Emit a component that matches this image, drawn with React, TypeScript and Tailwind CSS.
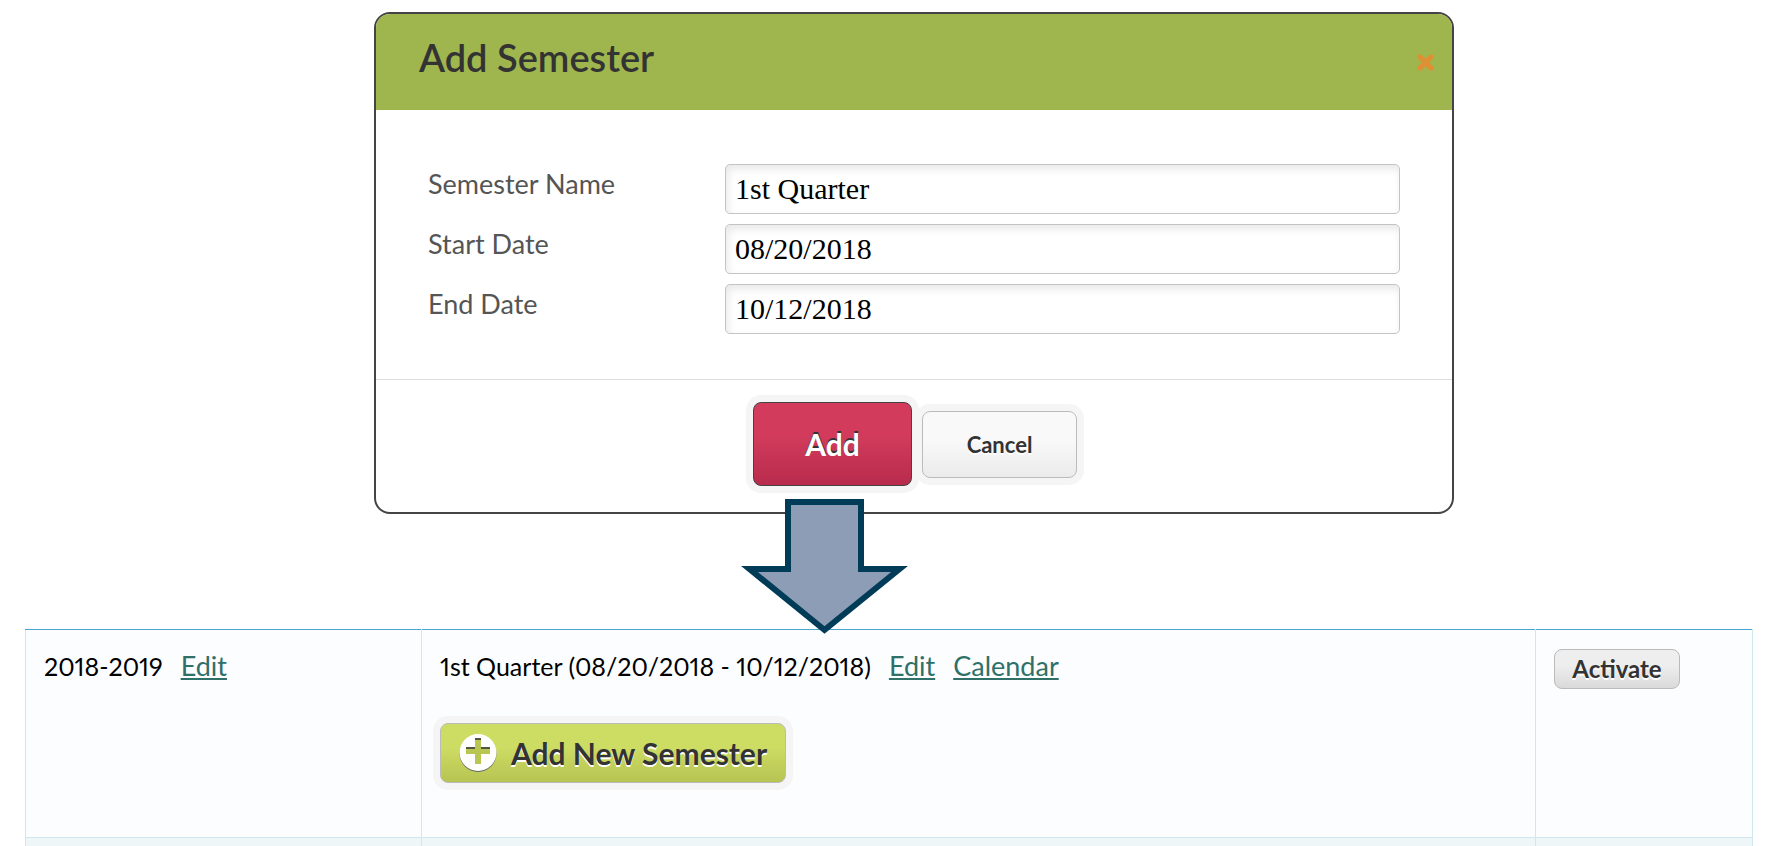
import React from 'react';

export default function App() {
  const fields = [
    { id: 'semester-name', label: 'Semester Name', value: '1st Quarter' },
    { id: 'start-date', label: 'Start Date', value: '08/20/2018' },
    { id: 'end-date', label: 'End Date', value: '10/12/2018' }
  ];

  const linkClass = 'ml-[18px] text-[27px] text-[#2f7068] underline decoration-2 underline-offset-2';

  return (
    <main className="bg-white pt-3 font-['Lato',sans-serif]">
      <div className="pl-[54px]">
        <section
          role="dialog"
          aria-labelledby="dialog-title"
          className="relative mx-auto w-full max-w-[1080px] rounded-2xl border-2 border-[#444444] bg-white"
        >
          <header className="flex h-24 items-center justify-between rounded-t-[14px] bg-[#9fb54e] pr-[18px] pl-[43px]">
            <h1 id="dialog-title" className="pb-[10px] text-[38px] leading-10 font-semibold text-[#333333]">
              Add Semester
            </h1>
            <button type="button" aria-label="Close" className="text-[#de9134]">
              <svg width="17" height="17" viewBox="0 0 16 16" fill="none" stroke="currentColor" strokeWidth="5" strokeLinecap="round">
                <path d="M2.8 2.8 13.2 13.2M13.2 2.8 2.8 13.2" />
              </svg>
            </button>
          </header>

          <form onSubmit={(e) => e.preventDefault()}>
            <div className="flex flex-col gap-[10px] pt-[54px] pr-[52px] pb-[45px] pl-[52px]">
              {fields.map((field) => (
                <div key={field.id} className="flex">
                  <label htmlFor={field.id} className="w-[297px] pt-1 text-[27px] leading-8 text-[#555555]">
                    {field.label}
                  </label>
                  <input
                    id={field.id}
                    type="text"
                    defaultValue={field.value}
                    className="h-[50px] min-w-0 flex-1 rounded-[5px] border border-[#c4c4c4] bg-white px-[9px] font-['Liberation_Serif',serif] text-[30px] leading-9 text-black shadow-[inset_2px_4px_8px_#e8e8e8] outline-none"
                  />
                </div>
              ))}
            </div>

            <div className="flex items-center justify-center gap-[10px] border-t border-[#dddddd] pt-[22px] pb-[26px] pl-[2px]">
              <button
                type="submit"
                className="h-[84px] w-[159px] rounded-lg border border-[#444444] bg-linear-to-b from-[#d23b5c] from-40% to-[#b82b4c] text-[30px] leading-8 font-bold text-white shadow-[0_0_0_7px_#f5f5f5] [text-shadow:0_-2px_0_#333333]"
              >
                Add
              </button>
              <button
                type="button"
                className="h-[67px] w-[155px] rounded-lg border border-[#bbbbbb] bg-linear-to-b from-[#f9f9f9] from-40% to-[#ebebeb] pt-[2px] text-[22px] leading-6 font-bold text-[#333333] shadow-[0_0_0_7px_#f5f5f5] [text-shadow:0_2px_0_#ffffff]"
              >
                Cancel
              </button>
            </div>
          </form>

          <svg
            className="absolute top-[485px] left-[365px]"
            width="168"
            height="136"
            viewBox="741 499 168 136"
            fill="#8c9db5"
            stroke="#003c58"
            strokeWidth="6"
            aria-hidden="true"
          >
            <path d="M788 502H861V569H899.5L824.5 630 749.5 569H788Z" />
          </svg>
        </section>
      </div>

      <div className="mt-[115px] mr-[21px] ml-[25px]">
        <table className="w-full table-fixed border-collapse text-[25px] leading-8 text-black proportional-nums">
          <colgroup>
            <col className="w-[396px]" />
            <col />
            <col className="w-[217px]" />
          </colgroup>
          <tbody>
            <tr className="h-[208px] bg-[#fcfdff] align-top">
              <td className="border border-t-[#4ba3cf] border-[#cfe7ef] px-[18px] pt-5">
                2018-2019
                <a href="#edit-year" className={linkClass}>Edit</a>
              </td>
              <td className="border border-t-[#4ba3cf] border-[#cfe7ef] px-[18px] pt-5">
                <p>
                  1st Quarter (08/20/2018 - 10/12/2018)
                  <a href="#edit-semester" className={linkClass}>Edit</a>
                  <a href="#calendar" className={linkClass}>Calendar</a>
                </p>
                <button
                  type="button"
                  className="mt-[41px] flex h-[60px] w-[346px] items-center gap-[14px] rounded-lg border border-[#bbbbbb] bg-linear-to-b from-[#cddc63] from-40% to-[#b7c452] pl-[18px] text-[30px] leading-8 font-bold whitespace-nowrap text-[#333333] shadow-[0_0_0_7px_#f5f5f5] [text-shadow:0_2px_0_#ffffff]"
                >
                  <svg width="38" height="38" viewBox="0 0 38 38" aria-hidden="true">
                    <circle cx="19" cy="19.5" r="18.5" fill="#666666" />
                    <circle cx="19" cy="18.5" r="18.5" fill="#ffffff" />
                    <path d="M16 5H22V14H31V20H22V30H16V20H7V14H16Z" fill="#b9c652" />
                    <path d="M16 4H22V6H16ZM7 13H16V15H7ZM22 13H31V15H22Z" fill="#555544" />
                  </svg>
                  Add New Semester
                </button>
              </td>
              <td className="border border-t-[#4ba3cf] border-[#cfe7ef] px-[18px] pt-[19px]">
                <button
                  type="button"
                  className="block h-10 w-[126px] rounded-lg border border-[#bbbbbb] bg-linear-to-b from-[#eeeeee] from-40% to-[#dadada] text-[24px] leading-6 font-bold text-[#333333] [text-shadow:0_2px_0_#ffffff]"
                >
                  Activate
                </button>
              </td>
            </tr>
            <tr className="h-[9px] bg-[#eef6f8]">
              <td className="border-x border-[#cfe7ef]" />
              <td className="border-x border-[#cfe7ef]" />
              <td className="border-x border-[#cfe7ef]" />
            </tr>
          </tbody>
        </table>
      </div>
    </main>
  );
}
